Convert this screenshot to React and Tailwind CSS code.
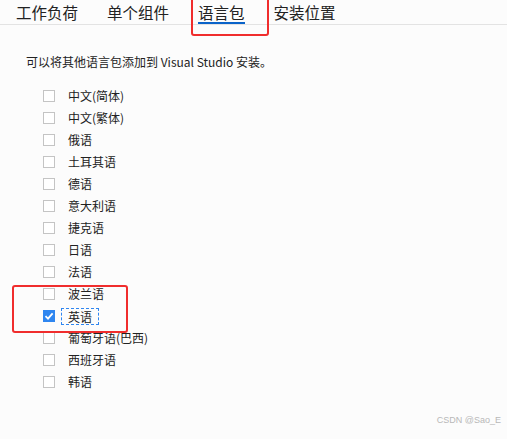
const FONT = { fontFamily: '"Segoe UI", "Noto Sans CJK SC", "Noto Sans", sans-serif' };

const tabs = ['工作负荷', '单个组件', '语言包', '安装位置'];

const langs = [
  '中文(简体)',
  '中文(繁体)',
  '俄语',
  '土耳其语',
  '德语',
  '意大利语',
  '捷克语',
  '日语',
  '法语',
  '波兰语',
  '英语',
  '葡萄牙语(巴西)',
  '西班牙语',
  '韩语',
];

function Check({ checked }) {
  if (checked) {
    return (
      <span className="flex h-[12px] w-[12px] items-center justify-center bg-[#2f86f0]">
        <svg width="10" height="10" viewBox="0 0 10 10">
          <path d="M1.5 5.2 L4 7.6 L8.6 2.4" fill="none" stroke="white" strokeWidth="1.8" />
        </svg>
      </span>
    );
  }
  return <span className="h-[12px] w-[12px] border border-[#c4c4c4] bg-white" />;
}

export default function App() {
  return (
    <div className="relative h-[439px] w-[507px] overflow-hidden bg-[#fcfcfc] text-[#1a1a1a]" style={FONT}>
      {/* tabs */}
      <div className="flex h-[25px] items-start gap-[29px] border-b border-[#e3e3e3] pl-[16px]">
        {tabs.map((t, i) => (
          <div key={t} className="relative h-[25px] text-[15.5px] leading-[24px] text-[#222]">
            {t}
            {i === 2 && <span className="absolute bottom-[1px] left-0 right-0 h-[2px] bg-[#0a63c9]" />}
          </div>
        ))}
      </div>

      <p className="mt-[29px] pl-[26px] text-[12px] leading-[16px] text-[#222]">
        可以将其他语言包添加到 Visual Studio 安装。
      </p>

      <ul className="mt-[15px] flex flex-col pl-[43px]">
        {langs.map((l) => (
          <li key={l} className="flex h-[22px] items-center gap-[13px] text-[12px] text-[#222]">
            <Check checked={l === '英语'} />
            {l === '英语' ? (
              <span className="-ml-[7px] border border-dashed border-[#2f86f0] px-[6px] leading-[15px]">{l}</span>
            ) : (
              <span>{l}</span>
            )}
          </li>
        ))}
      </ul>

      {/* red annotation boxes */}
      <div className="absolute left-[191px] top-[-4px] h-[40px] w-[78px] rounded-[3px] border-[2px] border-[#f02d2d]" />
      <div className="absolute left-[12px] top-[285px] h-[48px] w-[116px] rounded-[3px] border-[2px] border-[#f02d2d]" />

      <div className="absolute bottom-[12px] right-[6px] text-[9px] text-[#b8b8b8]" style={{ fontFamily: '"Liberation Sans", sans-serif' }}>
        CSDN @Sao_E
      </div>
    </div>
  );
}
